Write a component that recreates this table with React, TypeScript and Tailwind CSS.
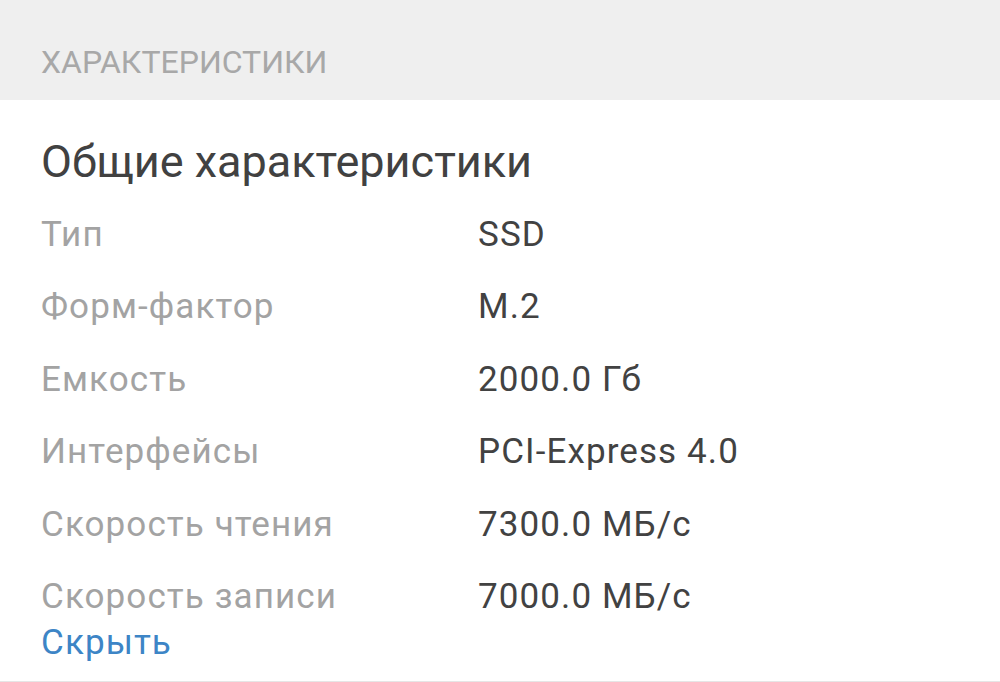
import React from "react";

const rows: [string, string][] = [
  ["Тип", "SSD"],
  ["Форм-фактор", "M.2"],
  ["Емкость", "2000.0 Гб"],
  ["Интерфейсы", "PCI-Express 4.0"],
  ["Скорость чтения", "7300.0 МБ/с"],
  ["Скорость записи", "7000.0 МБ/с"],
];

export default function App() {
  return (
    <div
      className="w-[1000px] h-[682px] bg-white overflow-hidden flex flex-col"
      style={{ fontFamily: "Roboto, 'Noto Sans', sans-serif" }}
    >
      <div className="h-[100px] shrink-0 bg-[#efefef] pl-[41px] pt-[24px]">
        <div className="text-[32px] leading-[76px] text-[#a8a8a8]">
          ХАРАКТЕРИСТИКИ
        </div>
      </div>
      <div className="flex-1 flex flex-col pl-[41px] border-b border-[#e6e6e6]">
        <div className="pt-[32px] text-[45px] leading-[60px] text-[#414141]">
          Общие характеристики
        </div>
        <div className="mt-[7px] flex flex-col">
          {rows.map(([k, v]) => (
            <div key={k} className="flex h-[72.4px] text-[35px] leading-[72.4px] tracking-[1.1px]">
              <div className="w-[437px] shrink-0 text-[#a3a3a3]">{k}</div>
              <div className="text-[#424242]">{v}</div>
            </div>
          ))}
        </div>
        <div className="text-[35px] leading-[20px] tracking-[1.1px] text-[#3d85c6]">Скрыть</div>
      </div>
    </div>
  );
}
